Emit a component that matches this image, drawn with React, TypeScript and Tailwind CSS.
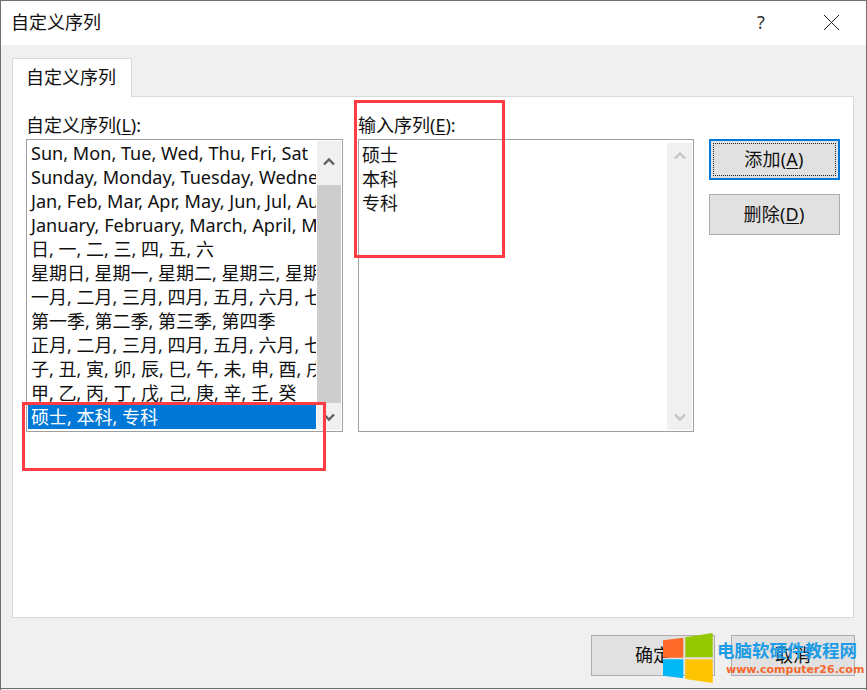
const leftRows = [
  "Sun, Mon, Tue, Wed, Thu, Fri, Sat",
  "Sunday, Monday, Tuesday, Wednesday, Thursday, Friday, Saturday",
  "Jan, Feb, Mar, Apr, May, Jun, Jul, Aug, Sep, Oct, Nov, Dec",
  "January, February, March, April, May, June, July, August",
  "日, 一, 二, 三, 四, 五, 六",
  "星期日, 星期一, 星期二, 星期三, 星期四, 星期五, 星期六",
  "一月, 二月, 三月, 四月, 五月, 六月, 七月, 八月",
  "第一季, 第二季, 第三季, 第四季",
  "正月, 二月, 三月, 四月, 五月, 六月, 七月, 八月",
  "子, 丑, 寅, 卯, 辰, 巳, 午, 未, 申, 酉, 戌, 亥",
  "甲, 乙, 丙, 丁, 戊, 己, 庚, 辛, 壬, 癸",
];

const Chevron = ({ down, color }: { down?: boolean; color: string }) => (
  <svg width="14" height="10" viewBox="0 0 14 10" fill="none">
    <path d={down ? "M2 2.5 L7 7.5 L12 2.5" : "M2 7.5 L7 2.5 L12 7.5"} stroke={color} strokeWidth="2.4" />
  </svg>
);

const Label = ({ text, hot }: { text: string; hot: string }) => (
  <div className="h-[26px] leading-[24px]">
    {text}(<span className="underline underline-offset-2">{hot}</span>):
  </div>
);

const Btn = ({ text, hot, border }: { text: string; hot: string; border: string }) => (
  <div className={`h-[41px] w-[131px] bg-[#e1e1e1] flex items-center justify-center ${border}`}>
    <span className="pr-px tracking-[0.2px]">
      {text}(<span className="underline underline-offset-2">{hot}</span>)
    </span>
  </div>
);

export default function App() {
  return (
    <div className="relative w-[867px] h-[690px] overflow-hidden bg-[#f0f0f0] text-[18px] text-[#111] font-['Noto_Sans','Noto_Sans_CJK_SC',sans-serif] flex flex-col border-t border-l border-r border-[#6f6f6f]">
      {/* title bar */}
      <div className="h-[44px] shrink-0 bg-white flex items-center pl-[10px] pb-[2px]">
        <span className="flex-1">自定义序列</span>
        <span className="w-[20px] text-center mr-[52px] text-[#333]">?</span>
        <svg className="mr-[26px]" width="17" height="17" viewBox="0 0 17 17" fill="none">
          <path d="M1 1 L16 16 M16 1 L1 16" stroke="#222" strokeWidth="1" />
        </svg>
      </div>

      {/* tab strip */}
      <div className="h-[51px] shrink-0 flex items-end pl-[11px]">
        <div className="relative z-10 -mb-px w-[120px] h-[39px] bg-white border border-b-0 border-[#d9d9d9] flex items-center justify-center pr-[2px] pb-[2px]">
          自定义序列
        </div>
      </div>

      {/* tab panel */}
      <div className="ml-[11px] w-[842px] h-[522px] shrink-0 bg-white border border-[#d9d9d9] pl-[13px] pt-[16px] flex items-start">
        <div className="w-[317px]">
          <Label text="自定义序列" hot="L" />
          <div className="relative h-[293px] border border-[#a0a0a0] pt-px flex">
            <div className="w-[288px] ml-px">
              {leftRows.map((row, i) => (
                <div
                  key={row}
                  className={`h-[24px] leading-[24px] pl-[3px] whitespace-nowrap overflow-hidden ${i < 4 ? "text-[18.1px]" : ""}`}
                >
                  {row}
                </div>
              ))}
              <div className="h-[24px] leading-[24px] pl-[3px] bg-[#0078d7] text-white whitespace-nowrap">
                硕士, 本科, 专科
              </div>
            </div>
            <div className="w-[24px] ml-px mb-px bg-[#f0f0f0] flex flex-col items-center">
              <div className="h-[44px] w-full shrink-0 flex items-center justify-center pb-[3px]">
                <Chevron color="#606060" />
              </div>
              <div className="h-[218px] w-full shrink-0 bg-[#cdcdcd]" />
              <div className="flex-1 w-full flex items-center justify-center">
                <Chevron down color="#606060" />
              </div>
            </div>
          </div>
        </div>

        <div className="ml-[15px] w-[336px]">
          <Label text="输入序列" hot="E" />
          <div className="h-[293px] border border-[#a0a0a0] pt-[3px] flex justify-between">
            <div className="pl-[3px]">
              <div className="h-[24px] leading-[24px]">硕士</div>
              <div className="h-[24px] leading-[24px]">本科</div>
              <div className="h-[24px] leading-[24px]">专科</div>
            </div>
            <div className="w-[25px] mr-px mb-px bg-[#f0f0f0] flex flex-col items-center justify-between py-[8px]">
              <Chevron color="#c4c4c4" />
              <Chevron down color="#c4c4c4" />
            </div>
          </div>
        </div>

        <div className="ml-[15px] pt-[26px] flex flex-col gap-[14px]">
          <div className="relative">
            <Btn text="添加" hot="A" border="border-2 border-[#0078d7]" />
            <div className="absolute inset-[4px] border border-dotted border-[#222]" />
          </div>
          <Btn text="删除" hot="D" border="border border-[#adadad]" />
        </div>
      </div>

      {/* footer buttons */}
      <div className="flex justify-end gap-[16px] pt-[17px] pr-[11px]">
        <div className="w-[124px] h-[41px] border border-[#adadad] bg-[#e1e1e1] flex items-center justify-center">确定</div>
        <div className="w-[124px] h-[41px] border border-[#adadad] bg-[#e1e1e1] flex items-center justify-center">取消</div>
      </div>

      {/* window bottom edge */}
      <div className="absolute left-0 right-0 bottom-px h-px bg-[#6f6f6f]" />

      {/* red annotation boxes */}
      <div className="absolute left-[353px] top-[99px] w-[151px] h-[158px] border-[3px] border-[#ff3b44]" />
      <div className="absolute left-[21px] top-[401px] w-[304px] h-[69px] border-[3px] border-[#ff3b44]" />

      {/* watermark */}
      <svg className="absolute left-[662px] top-[632px]" width="50" height="50" viewBox="0 0 50 50">
        <polygon points="0,7.3 20.3,4.7 20.3,24.7 0,24.7" fill="#ff6a2b" />
        <polygon points="22.3,4.3 49.7,0 49.7,24.3 22.3,24.3" fill="#95c800" />
        <polygon points="0,26.3 20.3,26.3 20.3,45.3 0,42.7" fill="#00b8f5" />
        <polygon points="22.3,26.3 49.7,26.3 49.7,50 22.3,46" fill="#ffc400" />
      </svg>
      <div className="absolute left-[716px] top-[637px] text-[17.5px] leading-[24px] font-bold text-[#1c9ce6] whitespace-nowrap">
        电脑软硬件教程网
      </div>
      <div className="absolute left-[725px] top-[661px] text-[11px] leading-[16px] font-bold text-[#f5682d] whitespace-nowrap font-['DejaVu_Sans',sans-serif]">
        www.computer26.com
      </div>
    </div>
  );
}
